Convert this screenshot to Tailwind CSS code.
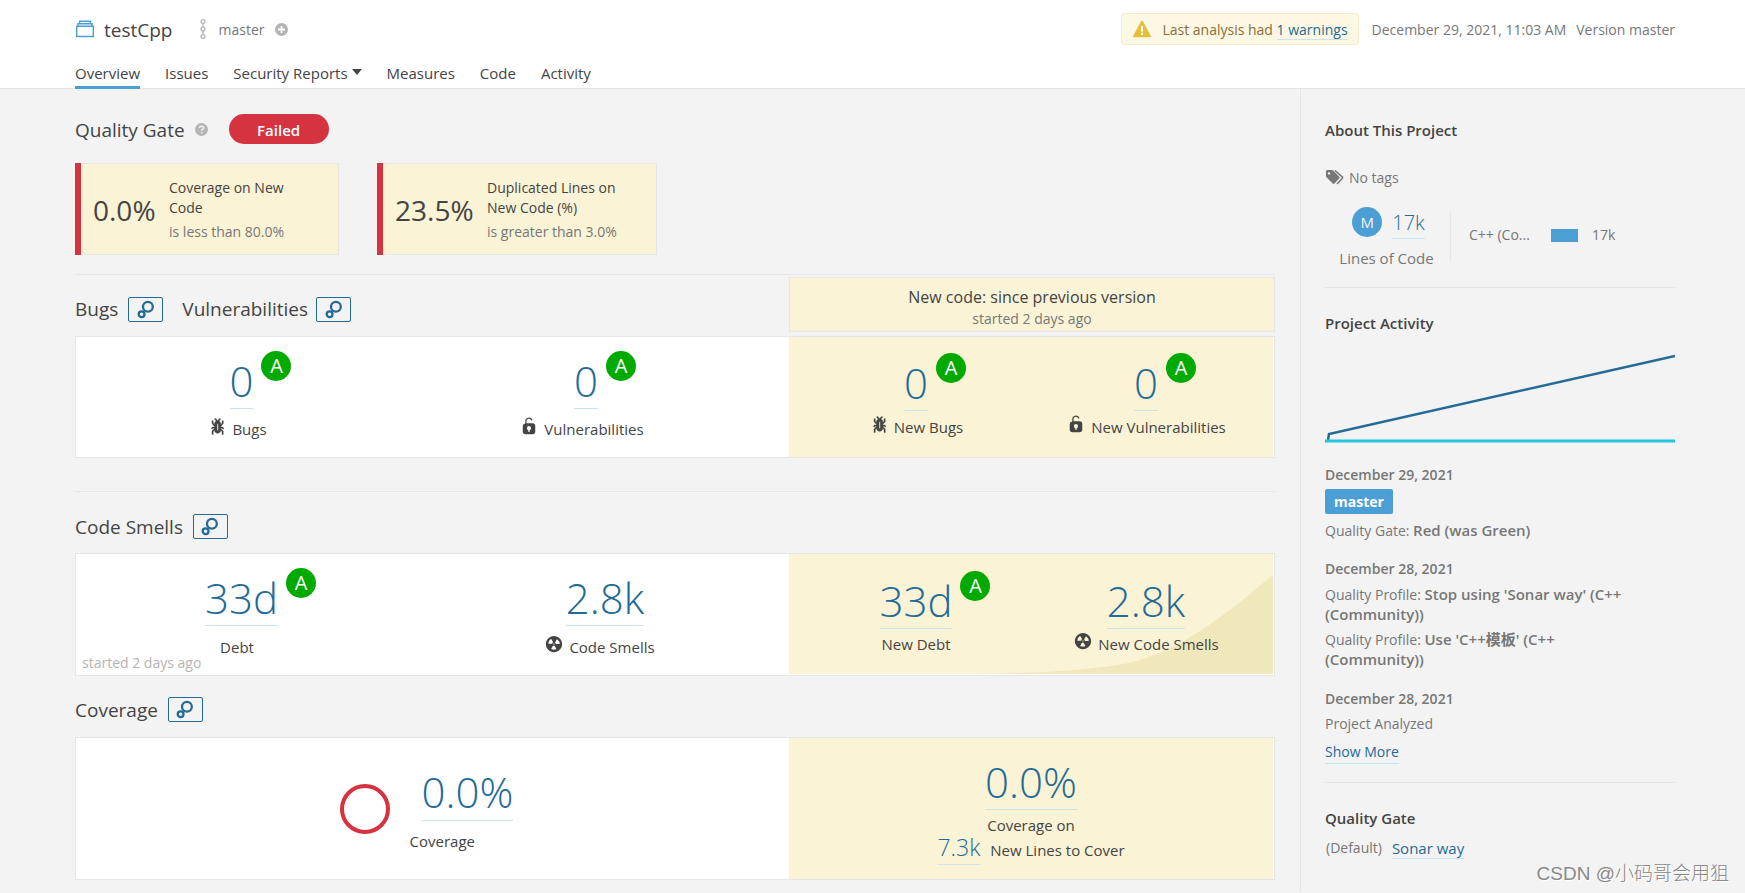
<!DOCTYPE html>
<html lang="en">
<head>
<meta charset="utf-8">
<title>testCpp</title>
<script src="https://cdn.jsdelivr.net/npm/@tailwindcss/browser@4"></script>
</head>
<body class="min-h-screen overflow-hidden bg-[#f3f3f3] font-['Open_Sans','Noto_Sans_CJK_SC',sans-serif] text-[15px] leading-5 text-[#444]">
<svg class="hidden" aria-hidden="true">
  <symbol id="bug" viewBox="0 0 16 16"><path fill="currentColor" stroke="currentColor" stroke-width=".3" fill-rule="evenodd" d="M11 9h1.300l.46.771.775-.543L12.780 8H11v-.330l2-2.343V3h-1v1.960l-1 1.172V5h-.029c-.101-.826-.658-1.520-1.436-1.853l1.472-1.349-.676-.736L8.500 2.740 6.669 1.060l-.676.736 1.472 1.349C6.687 3.480 6.130 4.170 6.030 5H6v1.130L5 4.960V3H4v2.330l2 2.340V8H4.243l-.733 1.228.775.543L4.745 9H6v.290l-2 1.912V14h1v-2.370l1.003-.959C6.020 11.960 7.070 13 8.360 13h.280c1.290 0 2.340-1.040 2.360-2.330l1 .96V14h1v-2.800l-2-1.910zM8 5.300h1v5.400H8z"/></symbol>
  <symbol id="lock" viewBox="0 0 16 16"><path fill="currentColor" d="M10.800 5H6V3.900a2.280 2.280 0 0 1 2-2.500 2.220 2.220 0 0 1 1.800 1.200.48.48 0 0 0 .7.2.48.48 0 0 0 .2-.7A3 3 0 0 0 8 .4a3.340 3.340 0 0 0-3 3.500v1.200a2.160 2.160 0 0 0-2 2.100v4.400a2.220 2.220 0 0 0 2.200 2.200h5.600a2.220 2.220 0 0 0 2.200-2.200V7.200A2.220 2.220 0 0 0 10.800 5zm-2.200 5.500v1.200H7.400v-1.200a1.660 1.660 0 0 1-1.100-1.600A1.750 1.750 0 0 1 8 7.200a1.710 1.710 0 0 1 .6 3.300z"/></symbol>
  <symbol id="smell" viewBox="0 0 16 16"><path fill="currentColor" d="M8 1.500C4.400 1.500 1.500 4.400 1.500 8s2.900 6.500 6.500 6.500 6.500-2.900 6.500-6.500S11.600 1.500 8 1.500zm-.5 6h.9v.9h-.9v-.9zm-3.800.2c-.1 0-.2-.1-.2-.2 0-.4.1-1.200.6-2S5.300 4.200 5.600 4c.2 0 .3 0 .3.1l1.300 2.300c0 .1 0 .2-.1.2-.1.2-.2.3-.3.5-.1.2-.2.4-.2.5 0 .1-.1.2-.2.2l-2.700-.1zM9.900 12c-.3.2-1.100.5-2 .5-.9 0-1.700-.3-2-.5-.1 0-.1-.2-.1-.3l1.300-2.300c0-.1.1-.1.2-.1.2.1.3.1.5.1s.4 0 .5-.1c.1 0 .2 0 .2.1l1.300 2.300c.2.2.2.3.1.3zm2.500-4.100L9.700 8c-.1 0-.2-.1-.2-.2 0-.2-.1-.4-.2-.5 0-.1-.2-.3-.3-.4-.1 0-.1-.1-.1-.2l1.300-2.300c.1-.1.2-.1.3-.1.3.2 1 .7 1.500 1.500s.6 1.600.6 2c0 0-.1.1-.2.1z"/></symbol>
  <symbol id="bubbles" viewBox="0 0 20 20"><g fill="none" stroke="currentColor" stroke-width="2.300"><circle cx="11.900" cy="6.800" r="4.900"/><circle cx="5.600" cy="14.200" r="2.900"/></g></symbol>
</svg>

<header class="border-b border-[#e6e6e6] bg-white pt-[13px] pr-[70px] pl-[75px]">
  <div class="flex h-8 items-center">
    <svg class="mr-[9px] h-5 w-5 text-[#4b9fd5]" viewBox="0 0 20 20" fill="none" stroke="currentColor" stroke-width="1.400"><path d="M1.700 7.200h16.600v10.300H1.700zM3 7V4.700h14V7M4.600 4.600V2.200h10.800v2.400"/></svg>
    <h1 class="pt-px text-[19px] leading-7">testCpp</h1>
    <svg class="ml-6 h-6 w-3 text-[#b4b4b4]" viewBox="0 0 12 24" fill="none" stroke="currentColor" stroke-width="1.300"><circle cx="6" cy="4.500" r="1.900"/><circle cx="6" cy="12" r="1.900"/><circle cx="6" cy="19.500" r="1.900"/><path d="M6 6.500v3.500M6 14v3.500"/></svg>
    <span class="ml-[10px] pt-px text-[14px] text-[#777]">master</span>
    <button type="button" aria-label="Branch settings" class="ml-[10px]"><svg class="h-[13px] w-[13px]" viewBox="0 0 14 14"><circle cx="7" cy="7" r="7" fill="#b4b4b4"/><path d="M7 3.200v7.600M3.200 7h7.600" stroke="#fff" stroke-width="2"/></svg></button>
    <div class="ml-auto flex items-center text-[14px] text-[#777]">
      <div class="flex h-8 items-center rounded-[3px] border border-[#faebcc] bg-[#fcf8e3] px-[10px] text-[#8a6d3b]">
        <svg class="mr-[11px] ml-px h-[18px] w-[18px]" viewBox="0 0 18 18"><path d="M9 1.500 17 16.300H1z" fill="#e5bf3c" stroke="#e5bf3c" stroke-width="1.800" stroke-linejoin="round"/><path d="M9 6v5.500M9 12.800v2.200" stroke="#fff" stroke-width="2"/></svg>
        <span class="pt-px">Last analysis had <a href="#" class="border-b border-[#cae3f2] text-[#236a97]">1 warnings</a></span>
      </div>
      <time class="ml-[13px] pt-px">December 29, 2021, 11:03 AM</time>
      <span class="ml-[10px] pt-px">Version master</span>
    </div>
  </div>
  <nav class="mt-4 -mb-px flex gap-[25px] leading-6">
    <a href="#" class="border-b-[3px] border-[#4b9fd5] pb-px">Overview</a>
    <a href="#">Issues</a>
    <a href="#" class="flex">Security Reports<svg class="mt-2 ml-1 h-[6px] w-[10px]" viewBox="0 0 10 6"><path d="M0 0h10L5 6z" fill="#444"/></svg></a>
    <a href="#">Measures</a>
    <a href="#">Code</a>
    <a href="#">Activity</a>
  </nav>
</header>

<div class="flex">
  <main class="min-w-0 flex-1 pr-[25px] pb-3 pl-[75px]">
    <div class="flex items-center pt-[25px]">
      <h2 class="pt-px text-[19px] leading-7">Quality Gate</h2>
      <svg class="ml-[10px] h-[13px] w-[13px]" viewBox="0 0 14 14"><circle cx="7" cy="7" r="7" fill="#b4b4b4"/><path d="M4.800 5.500c0-2.800 4.500-2.700 4.500-.2 0 1.500-2.200 1.500-2.200 3.100M7.100 9.600v1.700" fill="none" stroke="#f3f3f3" stroke-width="1.600"/></svg>
      <span class="ml-[21px] flex h-[30px] w-[100px] items-center justify-center rounded-full bg-[#d4333f] pt-px font-semibold text-white">Failed</span>
    </div>

    <div class="mt-[19px] flex gap-[38px]">
      <a href="#" class="flex w-[264px] text-[14px]">
        <span class="w-[6px] bg-[#d4333f]"></span>
        <span class="flex flex-1 items-center border border-l-0 border-[#e6e6e6] bg-[#fbf3d5] pt-[14px] pb-3 pl-3">
          <span class="w-[76px] text-[28px] leading-8">0.0%</span>
          <span class="w-[140px]"><span class="block">Coverage on New Code</span><span class="mt-1 block text-[#777]">is less than 80.0%</span></span>
        </span>
      </a>
      <a href="#" class="flex w-[280px] text-[14px]">
        <span class="w-[6px] bg-[#d4333f]"></span>
        <span class="flex flex-1 items-center border border-l-0 border-[#e6e6e6] bg-[#fbf3d5] pt-[14px] pb-3 pl-3">
          <span class="w-[92px] text-[28px] leading-8">23.5%</span>
          <span class="w-[150px]"><span class="block">Duplicated Lines on New Code (%)</span><span class="mt-1 block text-[#777]">is greater than 3.0%</span></span>
        </span>
      </a>
    </div>

    <section class="mt-[19px] border-t border-[#e6e6e6] pt-[2px]">
      <div class="flex items-stretch">
        <div class="flex flex-1 items-end pb-[10px] text-[19px] leading-[25px]">
          <h2>Bugs</h2>
          <button type="button" aria-label="Bugs measures" class="ml-[10px] flex h-[25px] w-[35px] items-center justify-center rounded-[2px] border border-[#236a97] text-[#236a97]"><svg class="h-5 w-5"><use href="#bubbles"/></svg></button>
          <h2 class="ml-[19px]">Vulnerabilities</h2>
          <button type="button" aria-label="Vulnerabilities measures" class="ml-2 flex h-[25px] w-[35px] items-center justify-center rounded-[2px] border border-[#236a97] text-[#236a97]"><svg class="h-5 w-5"><use href="#bubbles"/></svg></button>
        </div>
        <div class="w-[486px] border border-[#e6e6e6] bg-[#fbf3d5] pt-[7px] pb-[2px] text-center">
          <p class="text-[16px] leading-6">New code: since previous version</p>
          <p class="text-[14px] text-[#777]">started 2 days ago</p>
        </div>
      </div>
      <div class="mt-1 flex border border-[#e6e6e6] bg-white">
        <div class="grid flex-1 grid-cols-[328fr_385fr] pt-[23px] pb-[18px]">
          <div class="flex flex-col items-center">
            <div class="relative ml-[3px]"><a href="#" class="block border-b border-[#cae3f2] pt-px pb-[7px] text-[42px] leading-10 font-light text-[#236a97]">0</a><span class="absolute -top-[9px] left-full ml-2 flex h-[30px] w-[30px] items-center justify-center rounded-full bg-[#0a0] text-[20px] text-white">A</span></div>
            <div class="mt-[10px] flex gap-[5px] pr-[6px]"><svg class="-mt-[2px] h-5 w-5"><use href="#bug"/></svg>Bugs</div>
          </div>
          <div class="flex flex-col items-center pr-6">
            <div class="relative ml-[3px]"><a href="#" class="block border-b border-[#cae3f2] pt-px pb-[7px] text-[42px] leading-10 font-light text-[#236a97]">0</a><span class="absolute -top-[9px] left-full ml-2 flex h-[30px] w-[30px] items-center justify-center rounded-full bg-[#0a0] text-[20px] text-white">A</span></div>
            <div class="mt-[10px] flex gap-[5px] pr-[6px]"><svg class="-mt-[2px] h-5 w-5"><use href="#lock"/></svg>Vulnerabilities</div>
          </div>
        </div>
        <div class="mr-px grid w-[484px] grid-cols-[254fr_206fr] bg-[#fbf3d5] pt-[25px] pr-6 pb-5">
          <div class="flex flex-col items-center">
            <div class="relative"><a href="#" class="block border-b border-[#cae3f2] pt-px pb-[7px] text-[42px] leading-10 font-light text-[#236a97]">0</a><span class="absolute -top-[9px] left-full ml-2 flex h-[30px] w-[30px] items-center justify-center rounded-full bg-[#0a0] text-[20px] text-white">A</span></div>
            <div class="mt-[6px] flex gap-[5px]"><svg class="-mt-[2px] h-5 w-5"><use href="#bug"/></svg>New Bugs</div>
          </div>
          <div class="flex flex-col items-center">
            <div class="relative"><a href="#" class="block border-b border-[#cae3f2] pt-px pb-[7px] text-[42px] leading-10 font-light text-[#236a97]">0</a><span class="absolute -top-[9px] left-full ml-2 flex h-[30px] w-[30px] items-center justify-center rounded-full bg-[#0a0] text-[20px] text-white">A</span></div>
            <div class="mt-[6px] flex gap-[5px]"><svg class="-mt-[2px] h-5 w-5"><use href="#lock"/></svg>New Vulnerabilities</div>
          </div>
        </div>
      </div>
    </section>

    <section class="mt-[33px] border-t border-[#e6e6e6] pt-[22px]">
      <div class="flex text-[19px] leading-[25px]">
        <h2 class="pt-px">Code Smells</h2>
        <button type="button" aria-label="Code smells measures" class="ml-[10px] flex h-[25px] w-[35px] items-center justify-center rounded-[2px] border border-[#236a97] text-[#236a97]"><svg class="h-5 w-5"><use href="#bubbles"/></svg></button>
      </div>
      <div class="mt-[13px] flex border border-[#e6e6e6] bg-white">
        <div class="relative grid flex-1 grid-cols-[328fr_385fr] pt-[23px] pb-[18px]">
          <div class="flex flex-col items-center">
            <div class="relative ml-[3px]"><a href="#" class="block border-b border-[#cae3f2] pt-px pb-[7px] text-[42px] leading-10 font-light text-[#236a97]">33d</a><span class="absolute -top-[9px] left-full ml-2 flex h-[30px] w-[30px] items-center justify-center rounded-full bg-[#0a0] text-[20px] text-white">A</span></div>
            <div class="mt-[11px] pr-[6px]">Debt</div>
          </div>
          <div class="flex flex-col items-center pl-[14px]">
            <a href="#" class="ml-[3px] block border-b border-[#cae3f2] pt-px pb-[7px] text-[42px] leading-10 font-light text-[#236a97]">2.8k</a>
            <div class="mt-[11px] flex gap-[5px] pr-2"><svg class="-mt-[3px] h-5 w-5"><use href="#smell"/></svg>Code Smells</div>
          </div>
          <span class="absolute bottom-[2px] left-[6px] text-[14px] text-[#b4b4b4]">started 2 days ago</span>
        </div>
        <div class="relative mr-px mb-px w-[484px] bg-[#fbf3d5]">
          <svg class="absolute inset-0 h-full w-full" viewBox="0 0 484 120" preserveAspectRatio="none"><path d="M170 120C240 119.500 300 117 340 109 390 97 432 65 484 21V120z" fill="#f0e7ba"/></svg>
          <div class="relative grid grid-cols-[254fr_206fr] pt-[26px] pr-6 pb-5">
            <div class="flex flex-col items-center">
              <div class="relative"><a href="#" class="block border-b border-[#cae3f2] pt-px pb-[7px] text-[42px] leading-10 font-light text-[#236a97]">33d</a><span class="absolute -top-[9px] left-full ml-2 flex h-[30px] w-[30px] items-center justify-center rounded-full bg-[#0a0] text-[20px] text-white">A</span></div>
              <div class="mt-[5px]">New Debt</div>
            </div>
            <div class="flex flex-col items-center">
              <a href="#" class="block border-b border-[#cae3f2] pt-px pb-[7px] text-[42px] leading-10 font-light text-[#236a97]">2.8k</a>
              <div class="mt-[5px] flex gap-[5px]"><svg class="-mt-[3px] h-5 w-5"><use href="#smell"/></svg>New Code Smells</div>
            </div>
          </div>
        </div>
      </div>
    </section>

    <section class="mt-[21px]">
      <div class="flex text-[19px] leading-[25px]">
        <h2 class="pt-px">Coverage</h2>
        <button type="button" aria-label="Coverage measures" class="ml-[10px] flex h-[25px] w-[35px] items-center justify-center rounded-[2px] border border-[#236a97] text-[#236a97]"><svg class="h-5 w-5"><use href="#bubbles"/></svg></button>
      </div>
      <div class="mt-[14px] flex border border-[#e6e6e6] bg-white">
        <div class="flex flex-1 items-center justify-center gap-5 pt-[6px] pr-3">
          <span class="mb-[6px] h-[50px] w-[50px] rounded-full border-[4px] border-[#d4333f]"></span>
          <div>
            <a href="#" class="ml-3 block border-b border-[#cae3f2] pb-2 text-[42px] leading-10 font-light text-[#236a97]">0.0%</a>
            <div class="mt-[10px]">Coverage</div>
          </div>
        </div>
        <div class="mr-px flex w-[484px] flex-col items-center bg-[#fbf3d5] pt-[23px] pb-[14px]">
          <a href="#" class="block border-b border-[#cae3f2] pt-px pb-[7px] text-[42px] leading-10 font-light text-[#236a97]">0.0%</a>
          <div class="mt-[5px]">Coverage on</div>
          <div class="flex items-baseline gap-[10px]"><a href="#" class="border-b border-[#cae3f2] pb-[5px] text-[23px] leading-6 font-light text-[#236a97]">7.3k</a>New Lines to Cover</div>
        </div>
      </div>
    </section>
  </main>

  <aside class="w-[445px] shrink-0 border-l border-[#e6e6e6] pt-[31px] pr-[70px] pl-6 text-[14px] text-[#777]">
    <h3 class="text-[15px] font-semibold text-[#444]">About This Project</h3>
    <div class="mt-7 flex items-center gap-[5px]"><svg class="ml-px h-[18px] w-[18px]" viewBox="0 0 18 18"><path fill="#777" fill-rule="evenodd" d="M0 2.500C0 1.700.7 1 1.500 1h4.300c.5 0 1 .2 1.400.6l6 6.100c.5.500.5 1.300 0 1.800l-4.700 5c-.5.500-1.300.5-1.800 0L.5 8.300C.2 8 0 7.500 0 7zM3 3.200a1.200 1.200 0 1 0 0 2.400 1.200 1.200 0 0 0 0-2.400z"/><path fill="none" stroke="#777" stroke-width="1.500" d="M8.700 1.700h.5l7 6.200c.5.500.5 1 0 1.500L11 15"/></svg>No tags</div>
    <div class="mt-[19px] flex items-start">
      <div class="w-[125px] pr-[2px] text-center">
        <div class="flex justify-center gap-[10px] pl-1">
          <span class="flex h-[30px] w-[30px] items-center justify-center rounded-full bg-[#4b9fd5] text-[15px] text-[#f3f3f3]">M</span>
          <a href="#" class="mt-1 border-b border-[#cae3f2] pb-[3px] text-[20px] leading-6 font-light text-[#236a97]">17k</a>
        </div>
        <p class="mt-[9px] text-[15px]">Lines of Code</p>
      </div>
      <div class="mt-[5px] flex h-[50px] items-center border-l border-[#e6e6e6] pb-1 pl-[18px]">
        <span class="w-[70px] whitespace-nowrap">C++ (Co...</span>
        <span class="ml-3 h-[13px] w-[27px] bg-[#4b9fd5]"></span>
        <span class="ml-[14px]">17k</span>
      </div>
    </div>
    <div class="mt-[19px] border-t border-[#e6e6e6] pt-[25px]">
      <h3 class="text-[15px] font-semibold text-[#444]">Project Activity</h3>
      <svg class="mt-[16px] h-[96px] w-full" viewBox="0 0 350 96" preserveAspectRatio="none" fill="none"><path d="M3 91 4 85 350 7" stroke="#236a97" stroke-width="2.500"/><path d="M0 92h350" stroke="#24c6e0" stroke-width="3"/></svg>
      <h4 class="mt-[20px] font-semibold">December 29, 2021</h4>
      <span class="mt-1 block w-fit rounded-[2px] bg-[#4b9fd5] px-[9px] leading-[25px] font-bold text-white">master</span>
      <p class="mt-[7px]">Quality Gate: <b class="text-[15px] leading-4 font-semibold">Red (was Green)</b></p>
      <h4 class="mt-[18px] font-semibold">December 28, 2021</h4>
      <p class="mt-[6px]">Quality Profile: <b class="text-[15px] leading-4 font-semibold">Stop using 'Sonar way' (C++ (Community))</b></p>
      <p class="mt-[5px] pr-10">Quality Profile: <b class="text-[15px] leading-4 font-semibold">Use 'C++模板' (C++ (Community))</b></p>
      <h4 class="mt-[19px] font-semibold">December 28, 2021</h4>
      <p class="mt-[5px]">Project Analyzed</p>
      <a href="#" class="mt-2 block w-fit border-b border-[#cae3f2] pb-px text-[#236a97]">Show More</a>
    </div>
    <div class="mt-[18px] border-t border-[#e6e6e6] pt-[25px]">
      <h3 class="text-[15px] font-semibold text-[#444]">Quality Gate</h3>
      <div class="mt-[10px] ml-px flex gap-[10px]">(Default)<a href="#" class="border-b border-[#cae3f2] text-[15px] text-[#236a97]">Sonar way</a></div>
    </div>
  </aside>
</div>
<div class="absolute right-4 bottom-[7px] text-[19px] leading-6 font-light text-[#888] [text-shadow:1px_1px_0_#fff] font-['Liberation_Sans','Noto_Sans_CJK_SC',sans-serif]">CSDN @小码哥会用狙</div>
</body>
</html>
